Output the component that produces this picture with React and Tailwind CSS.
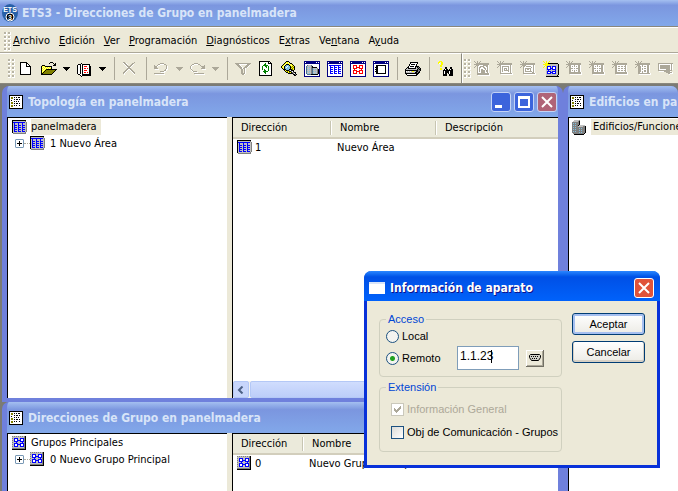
import React from "react";

const UI = "font-['DejaVu_Sans_Condensed','Noto_Sans',sans-serif]";
const CAPTION = "font-['DejaVu_Sans_Condensed','Noto_Sans',sans-serif]";

const COLORS = {
  k: "#000000", w: "#ffffff", g: "#aca899", d: "#808080", s: "#c0c0c0",
  b: "#0000ff", n: "#000080", y: "#ffff00", o: "#808000", r: "#ff0000",
  e: "#008000", c: "#80c0e0", l: "#ffff99", m: "#507088",
};

function Pixels({ rows, size = 16 }) {
  const rects = [];
  rows.forEach((row, y) => {
    let x = 0;
    while (x < row.length) {
      const ch = row[x];
      let end = x + 1;
      while (end < row.length && row[end] === ch) end++;
      if (COLORS[ch]) rects.push(<rect key={`${x}-${y}`} x={x} y={y} width={end - x} height={1} fill={COLORS[ch]} />);
      x = end;
    }
  });
  return (
    <svg width={size} height={size} viewBox={`0 0 ${size} ${size}`} shapeRendering="crispEdges" className="block shrink-0" aria-hidden="true">
      {rects}
    </svg>
  );
}

const NEW = [
  "", "..kkkkkkk", "..kwwwwwkk", "..kwwwwwkwk", "..kwwwwwkwwk", "..kwwwwwkkkkk", "..kwwwwwwwwwk", "..kwwwwwwwwwk",
  "..kwwwwwwwwwk", "..kwwwwwwwwwk", "..kwwwwwwwwwk", "..kwwwwwwwwwk", "..kwwwwwwwwwk", "..kkkkkkkkkkk",
];
const OPEN = [
  "", ".........kkk", "........k...k.k", ".............kk", ".kkk........kkk", "kylykkkkkkk", "klylylylylk", "kylylylylyk",
  "klylykkkkkkkkkkk", "kylykoooooooook", "klykoooooooook", "kykoooooooook", "kkoooooooook", "kkkkkkkkkkk",
];
const BOOK = [
  "", "", "....k", ".kkkwkkkkkkkk", "kwwkwkwwwwwwk", "kwwkwkwrrrwwkk", "kwwkwkwwwwwwkk", "kwwkwkwrrwrwkk",
  "kwwkwkwwwwwwkk", "kwwkwkwrrrwwkk", "kwwkwkwwwwwwkk", "kwwkwkwrrwrwkk", "kwwkwkwwwwwwkk", ".kkwwkkkkkkkkk", "...kwkkkkkkkkk", "....k",
];
const DELETE = [
  "", ".gg.........g", ".wggw.....gg", "..wggw...ggw", "...wgg..ggw", "....wggggw", ".....wggw", ".....gggg",
  "....ggwwgg", "...ggw..wgg", "..ggw....wgg", ".ggw......wgg", ".gw........wg", "..w.........w",
];
const UNDO = [
  "", "", "......gggg", "....ggwwwwgg", "g..gww......g", "gggw........gw", "ggg.........gw", "gggg........gw",
  ".wwww......gww", "..........ggw", "......ggggww", ".......wwww", "gggggggggg", ".wwwwwwwwww",
];
const REDO = [
  "", "", "....gggg", "..ggwwwwgg", ".gww......g...g", "gw.........gggg", "gw..........ggg", "gw.........gggg",
  ".g..........wwww", ".wg", "..wgggg", "....wwww", "....gggggggggg", ".....wwwwwwwwww",
];
const FILTER = [
  "", "", "gggggggggggggggg", ".gggwwwwwwwwggg", "..gggw.....gggw", "...gggw...gggw", "....gggw.gggw", ".....ggwggw",
  "......gg.gw", "......gg.gw", "......gg.gw", "......gg.gw", "......ggggw", ".......ggw",
];
const REFRESH = [
  ".kkkkkkkkkkk", ".kwwwwwwwwkwk", ".kwwwwwewwkkkk", ".kwwwweewwwwwk", ".kwwweeeeewwwk", ".kwwewweewewwk", ".kwwewwwewewwk",
  ".kwwewwwwwewwk", ".kwwewewwwewwk", ".kwwwweewwewwk", ".kwwweeeeewwwk", ".kwwwweewwwwwk", ".kwwwwwewwwwwk", ".kwwwwwwwwwwwk", ".kkkkkkkkkkkkk",
];
const SEARCH = [
  ".....kkk", "....kyylk", "...kylylykk", "..kylkkkylyk", ".kylkccckylyk", "kylkccwcckyoyk", "kylkcwccckoyok", ".kykccccckyoyk",
  "..kkkccckkkoyk", "...kykkkdwkkk", "....kyoykkdwk", ".....kkyoykddkk", ".......kkkkkdwk", "............kkdk", ".............kk",
];
const WIN_BUILDING = [
  "nnnnnnnnnnnnnnnn", "nwnnnnnnnnnnwnwn", "nnnnnnnnnnnnnnnn", "nwwwwwwwwwwwwwwn", "nwwmsssmwwwwwwwn", "nwmssssdkwwwwwwn", "nwmcscsdkkkkkwwn",
  "nwmssssdmssssdwn", "nwmcscsdmcscsdkn", "nwmssssdmssssdkn", "nwmcscsdmcscsdkn", "nwmssssdmssssdkn", "nwmcscsdmcscsdkn", "nwwmmmmkkkkkkkwn", "nwwwwwwwwwwwwwwn", "nnnnnnnnnnnnnnnn",
];
const WIN_TABLE = [
  "nnnnnnnnnnnnnnnn", "nwnnnnnnnnnnwnwn", "nnnnnnnnnnnnnnnn", "nwwwwwwwwwwwwwwn", "nwbbbbbbbbbbbbwn", "nwwbwwwbwwwbwwwn", "nwwbbbwbbbwbbbwn",
  "nwwbwwwbwwwbwwwn", "nwwbbbwbbbwbbbwn", "nwwbwwwbwwwbwwwn", "nwwbbbwbbbwbbbwn", "nwwbwwwbwwwbwwwn", "nwwbbbwbbbwbbbwn", "nwwwwwwwwwwwwwwn", "nwwwwwwwwwwwwwwn", "nnnnnnnnnnnnnnnn",
];
const WIN_GROUP = [
  "nnnnnnnnnnnnnnnn", "nwnnnnnnnnnnwnwn", "nnnnnnnnnnnnnnnn", "nwwwwwwwwwwwwwwn", "nwwrrrrwwrrrrwwn", "nwwrwwrwwrwwrwwn", "nwwrwwrrrrwwrwwn",
  "nwwrrrrwwrrrrwwn", "nwwwrwwwwwwrwwwn", "nwwrrrrwwrrrrwwn", "nwwrwwrrrrwwrwwn", "nwwrwwrwwrwwrwwn", "nwwrrrrwwrrrrwwn", "nwwwwwwwwwwwwwwn", "nwwwwwwwwwwwwwwn", "nnnnnnnnnnnnnnnn",
];
const WIN_BOX = [
  "nnnnnnnnnnnnnnnn", "nwnnnnnnnnnnwnwn", "nnnnnnnnnnnnnnnn", "nwwwwwwwwwwwwwwn", "nwwkkkkkkkkkkwwn", "nwwkkwwwwwwwkwwn", "nwkkkwwwwwwwkwwn",
  "nwwkkwwwwwwwkwwn", "nwkkkwwwwwwwkwwn", "nwwkkwwwwwwwkwwn", "nwkkkwwwwwwwkwwn", "nwwkkwwwwwwwkwwn", "nwwkkkkkkkkkkwwn", "nwwwwwwwwwwwwwwn", "nwwwwwwwwwwwwwwn", "nnnnnnnnnnnnnnnn",
];
const PRINT = [
  "", ".....kkkkkkkk", ".....kwwwwwwk", "....kwkkkkwk", "....kwwwwwwk", "...kwkkkkwkkkk", "..kkwwwwwwkskdk", ".kskkkkkkkksdkdk",
  "kssssssssssskdkk", "kkkkkkkkkkkkkddk", "kwswswsyysskkdk", "kssssssssskkdkk", "kkkkkkkkkkkkkk", ".kwwwwwwwwwkk", "..kkkkkkkkkk",
];
const FIND = [
  "..yyy", ".yy.yy", ".yw.yy", "....yy", "...yy", "...yy", "........kk...kk", "...yy...kk...kk",
  "...yy..kwkk.kwkk", "......kkkkkkkkkk", "......kwkkkkwkkk", "......kwkkkkwkkk", "......kwkk.kwkkk", "......kkkk..kkkk", "......kkkk..kkkk",
];
const SHEET = [
  "kkkkkkkkkkkkkk", "kwwwwwwwwwwwwk", "kwoowkwkwkkwwk", "kwoowwwwwwwwwk", "kwwwwkwkkwkwwk", "kwkwwwwwwwwwwk", "kwwwwkwkwkwwwk",
  "kwoowwwwwwwwwk", "kwoowkwkkwkwwk", "kwwwwwwwwwwwwk", "kwoowkwkwwkwwk", "kwoowwwwwwwwwk", "kwwwwwwwwwwwwk", "kkkkkkkkkkkkkk",
];
const TABLE = [
  "kkkkkkkkkkkkkk", "kssssssssssssd", "kbbbbbbbbbbbbsd", "ksbsssbsssbsssd", "ksbsssbsssbsssd", "ksbbbsbbbsbbbsd", "ksbsssbsssbsssd",
  "ksbbbsbbbsbbbsd", "ksbsssbsssbsssd", "ksbbbsbbbsbbbsd", "ksbsssbsssbsssd", "ksbbbsbbbsbbbsd", "kssssssssssssd", ".ddddddddddddd",
];
const GROUP = [
  "dsdsdsdsdsdsdk", "ssssssssssssdk", "dsbbbbssbbbbdk", "ssbwwbssbwwbdk", "dsbwwbbbbwwbdk", "ssbbbbssbbbbdk", "dsssbsssssbsdk",
  "ssbbbbssbbbbdk", "dsbwwbbbbwwbdk", "ssbwwbssbwwbdk", "dsbbbbssbbbbdk", "ssssssssssssdk", "dddddddddddddk", "kkkkkkkkkkkkkk",
];
const BUILDING = [
  "..sssssd", ".sssssdk", "dddddddk", "dcdcdddk", "dddddddk", "dcdcddkssssss", "ddddddsssssddk", "dcdcdddddddddk",
  "dddddddcdcdddk", "dcdcdddddddddk", "dddddddcdcdddk", "dcdcdddddddddk", "dddddddcdcdddk", ".dddddddddddk", "..kkkkkkkkkk",
];

const star = ["g..g..g", ".g.g.g", "..ggggggggggggg", "ggggggg.......ggw".replace(/\./g, "g").slice(0, 15)];
const gray = (rows) => star.concat(rows);
const G_HOUSE = gray([
  "..gggwwwwgggggw", ".g.gwwggggwwggw", "g..gwggwwggwwgw", "...gwgwwwwggwgw", "...gwgwggwwgwgw", "...gwgwggggwggw", "...gwgwggggwggw", "...gwwwggggwwgw", "...ggggggggggggw", "...ggggggggggggw", "....wwwwwwwwwwww",
]);
const G_ROOM = gray([
  "..ggwwwwwwwwwgw", ".g.gwgggggggwgw", "g..gwgwwwwwgwgw", "...gwgwgggwgwgw", "...gwgwgwgwgwgw", "...gwgwgggggwgw", "...gwgwwwwwgwgw", "...gwwwwwwwwwgw", "...ggggggggggggw", "....wwwwwwwwwwww",
]);
const G_DEVICE = gray([
  "..ggggwwwwwwwgw", ".g.ggwgggggwwgw", "g..gwwwwwwwgwgw", "...gwggggggwwgw", "...gwgwggwgwwgw", "...gwgwwwwgwwgw", "...gwgggggggwgw", "...gwwwwwwwwggw", "...ggggggggggggw", "....wwwwwwwwwwww",
]);
const G_GROUP = gray([
  "..gggwwwgwwwggw", ".g.ggwgwgwgwggw", "g..ggwwwwwwwggw", "...ggggwgwggggw", "...ggwwwwwwwggw", "...ggwgwgwgwggw", "...ggwwwgwwwggw", "...ggggggggggggw", "...ggggggggggggw", "....wwwwwwwwwwww",
]);
const G_TABLE = gray([
  "..gggwwwwwwwwgw", ".g.ggwggwggwggw", "g..ggwwwwwwwwgw", "...ggwggwggwggw", "...ggwwwwwwwwgw", "...ggwggwggwggw", "...ggwwwwwwwwgw", "...ggggggggggggw", "...ggggggggggggw", "....wwwwwwwwwwww",
]);
const G_LINE = gray([
  "..gggwwgwwwwggw", ".g.gggwgwggwggw", "g..gggwwwwwwggw", "...gggwgwggwggw", "...gggwgwwwwggw", "...gggwwwggwggw", "...gggwgwggwggw", "...ggwwgwwwwggw", "...ggggggggggggw", "....wwwwwwwwwwww",
]);
const G_VIEW = [
  "", "", "ggggggggggggggg", "gwwwwwwwwwwwwgw", "gwggggggggggwgw", "gwggggggggggwgw", "gwggggggggggwgw", "gwggggggggggwgw", "gwwwwwwwggggwgw", "gggggggggggggg", ".wwwwwggggggw", "........ggggggw", "..........ggwww", "...........w",
];
const Y_GROUP = [
  "y..y..y", ".y.y.y", "..yyykkkkkkkkkk", "yyyyyyyssssssssk", "..yyyssssssssssk", ".y.ybbbbsbbbbssk", "y..ybwwbsbwwbssk", "...sbwwbbbwwbssk", "...sbbbbsbbbbssk", "...ssbssssssbssk", "...sbbbbsbbbbssk", "...sbwwbbbwwbssk", "...sbbbbsbbbbssk", "...ssssssssssssk", "...sssssssssssk", "...kkkkkkkkkkkkk",
];

function AppLogo() {
  return (
    <svg width="16" height="18" viewBox="0 0 16 18" className="block shrink-0" aria-hidden="true">
      <ellipse cx="8" cy="9" rx="8" ry="9" fill="#2860a8" />
      <text x="8" y="8" textAnchor="middle" fontSize="7" fontWeight="700" fontFamily="Liberation Sans, sans-serif" fill="#fff">ETS</text>
      <circle cx="8" cy="13" r="4" fill="#000" stroke="#fff" strokeWidth="1" />
      <text x="8" y="16" textAnchor="middle" fontSize="7" fontWeight="700" fontFamily="Liberation Sans, sans-serif" fill="#fff">3</text>
    </svg>
  );
}

function Grip() {
  return (
    <span className="flex w-[7px] shrink-0 flex-col gap-px" aria-hidden="true">
      {[0, 1, 2, 3, 4].map((i) => (
        <span key={i} className="flex gap-px">
          <i className="size-[3px] border-r border-b border-white bg-[#b8b4a4]" />
          <i className="size-[3px] border-r border-b border-white bg-[#b8b4a4]" />
        </span>
      ))}
    </span>
  );
}

function Tool({ icon, label }) {
  return (
    <button type="button" aria-label={label} className="flex h-6 w-[23px] shrink-0 items-center pl-[3px]">
      <Pixels rows={icon} />
    </button>
  );
}

function Drop({ label, muted }) {
  return (
    <button type="button" aria-label={label} className="flex h-6 w-[13px] shrink-0 items-center pl-[2px]">
      <svg width="7" height="4" viewBox="0 0 7 4" shapeRendering="crispEdges" aria-hidden="true">
        <path d="M0 0h7v1h-1v1h-1v1h-1v1h-1v-1h-1v-1h-1v-1h-1z" fill={muted ? "#aca899" : "#000"} />
      </svg>
    </button>
  );
}

function Sep() {
  return <span className="mx-1 h-[23px] w-px shrink-0 bg-[#aca899]" />;
}

function Toolbars() {
  return (
    <div className="flex h-[31px] shrink-0 overflow-hidden border-b border-[#8a887c] bg-[#ece9d8]">
      <div className="flex shrink-0 items-center border-t border-r border-t-white border-r-[#8a887c] pr-1 pl-2" role="toolbar" aria-label="Estándar">
        <Grip />
        <Tool icon={NEW} label="Nuevo" />
        <Tool icon={OPEN} label="Abrir" />
        <Drop label="Abrir recientes" />
        <Tool icon={BOOK} label="Catálogo" />
        <Drop label="Catálogos" />
        <Sep />
        <Tool icon={DELETE} label="Borrar" />
        <Sep />
        <Tool icon={UNDO} label="Deshacer" />
        <Drop label="Lista deshacer" muted />
        <Tool icon={REDO} label="Rehacer" />
        <Drop label="Lista rehacer" muted />
        <Sep />
        <Tool icon={FILTER} label="Filtro" />
        <Tool icon={REFRESH} label="Actualizar" />
        <Tool icon={SEARCH} label="Explorar" />
        <Tool icon={WIN_BUILDING} label="Edificios" />
        <Tool icon={WIN_TABLE} label="Topología" />
        <Tool icon={WIN_GROUP} label="Direcciones de Grupo" />
        <Tool icon={WIN_BOX} label="Aparatos" />
        <Sep />
        <Tool icon={PRINT} label="Imprimir" />
        <Sep />
        <Tool icon={FIND} label="Buscar" />
      </div>
      <div className="flex min-w-0 flex-1 items-center overflow-hidden border-t border-l border-white pl-px" role="toolbar" aria-label="Insertar">
        <Grip />
        <Tool icon={G_HOUSE} label="Nuevo edificio" />
        <Tool icon={G_ROOM} label="Nueva sala" />
        <Tool icon={G_DEVICE} label="Nuevo armario" />
        <Tool icon={Y_GROUP} label="Nuevo grupo principal" />
        <Tool icon={G_GROUP} label="Nuevo grupo intermedio" />
        <Tool icon={G_GROUP} label="Nueva dirección" />
        <Tool icon={G_TABLE} label="Nueva área" />
        <Tool icon={G_LINE} label="Nueva línea" />
        <Tool icon={G_VIEW} label="Nuevo aparato" />
      </div>
    </div>
  );
}

const MENUS = [
  ["", "A", "rchivo"], ["", "E", "dición"], ["", "V", "er"], ["", "P", "rogramación"],
  ["", "D", "iagnósticos"], ["E", "x", "tras"], ["Ve", "n", "tana"], ["A", "y", "uda"],
];

function CaptionButton({ label, tone, children }) {
  return (
    <button type="button" aria-label={label} className={`flex size-5 items-center justify-center rounded-[3px] border text-white ${tone}`}>
      <svg width="18" height="18" viewBox="0 0 18 18" aria-hidden="true">{children}</svg>
    </button>
  );
}

const CROSS = <path d="M4 4l10 10M14 4L4 14" stroke="currentColor" strokeWidth="2" fill="none" />;
const BLUE_TONE = "border-[#c4d3f5] bg-[#3c64dc]";

function ChildWindow({ title, buttons, className, children }) {
  return (
    <section className={`flex min-w-0 flex-col overflow-hidden rounded-t-[7px] border-l-[5px] border-[#6f80dc] bg-[#6f80dc] ${className}`}>
      <header className="-mx-[5px] flex h-[31px] shrink-0 items-center bg-linear-to-b from-[#a4bff0] via-[#7b96df] via-25% to-[#82a8ea] pr-[6px] pl-[7px]">
        <Pixels rows={SHEET} size={14} />
        <h2 className={`ml-[5px] min-w-0 flex-1 overflow-hidden text-[12px] leading-4 font-bold whitespace-nowrap text-[#d8e4f8] ${CAPTION}`}>{title}</h2>
        {buttons && (
          <div className="flex gap-[3px]">
            <CaptionButton label="Minimizar" tone={BLUE_TONE}><path d="M3 12h7v3h-7z" fill="currentColor" /></CaptionButton>
            <CaptionButton label="Maximizar" tone={BLUE_TONE}><path d="M3 3h12v12h-12zM5 6h8v7h-8z" fillRule="evenodd" fill="currentColor" /></CaptionButton>
            <CaptionButton label="Cerrar" tone="border-[#c4d3f5] bg-[#b06478]">{CROSS}</CaptionButton>
          </div>
        )}
      </header>
      <div className="flex min-h-0 flex-1 bg-[#ece9d8]">{children}</div>
    </section>
  );
}

function Tree({ icon, root, child, selected }) {
  return (
    <div className="w-[220px] shrink-0 border-t border-l border-black bg-white pt-px pl-1">
      <div className="flex h-4 items-center gap-1">
        <Pixels rows={icon} size={15} />
        <span className={`h-4 pr-1 leading-[15px] ${selected ? "bg-[#ece9d8]" : ""}`}>{root}</span>
      </div>
      <div className="flex h-4 items-center pl-[3px]">
        <button type="button" aria-label={`Expandir ${child}`} className="size-[9px] shrink-0 rounded-[1px] border border-[#7898b5] bg-white">
          <svg width="7" height="7" viewBox="0 0 7 7" shapeRendering="crispEdges" aria-hidden="true"><path d="M1 3h5v1h-5zM3 1h1v5h-1z" /></svg>
        </button>
        <span className="w-[6px] border-t border-dotted border-[#aca899]" />
        <Pixels rows={icon} size={15} />
        <span className="ml-[5px] leading-[15px]">{child}</span>
      </div>
    </div>
  );
}

function List({ icon, heads, cells, widths }) {
  return (
    <table className="w-full table-fixed border-collapse text-left">
      <thead>
        <tr className="h-5 border-b-2 border-[#d2cebc] bg-[#ebeadb]">
          {heads.map((h, i) => (
            <th key={h} className={`relative p-0 pl-2 font-normal ${widths[i]}`}>
              {h}
              {i < heads.length - 1 && <span className="absolute top-[3px] right-0 h-[14px] w-[2px] border-l border-[#c7c5b2] bg-white" />}
            </th>
          ))}
        </tr>
      </thead>
      <tbody>
        <tr className="h-[18px]">
          <td className="p-0 pl-1"><span className="flex items-center gap-[3px]"><Pixels rows={icon} size={15} />{cells[0]}</span></td>
          <td className="overflow-visible p-0 pl-[5px] whitespace-nowrap">{cells[1]}</td>
          {heads.length > 2 && <td />}
        </tr>
      </tbody>
    </table>
  );
}

function PushButton({ children, primary }) {
  return (
    <button type="button" className={`h-[22px] w-full rounded-[3px] border border-[#003c74] bg-linear-to-b from-white to-[#ecebe5] leading-4 ${primary ? "shadow-[inset_0_0_0_2px_#a5bff0]" : "shadow-[inset_0_-1px_0_1px_#d6d0c5]"}`}>
      {children}
    </button>
  );
}

function DeviceDialog() {
  const legend = "px-[2px] leading-3 text-[#0046d5]";
  const radio = "size-[13px] shrink-0 appearance-none rounded-full border border-[#1c5180] bg-[#f4f4f0] checked:bg-[radial-gradient(circle,#21a121_0_2px,#f4f4f0_3px)]";
  const box = "size-[13px] shrink-0 appearance-none border";
  return (
    <div role="dialog" aria-label="Información de aparato" className="absolute top-[271px] left-[364px] w-[296px] rounded-t-[8px] border-x-[3px] border-b-[3px] border-[#0831d9] bg-[#ece9d8] font-['Liberation_Sans',sans-serif] text-[11px]">
      <header className="-mx-[3px] flex h-[30px] items-center rounded-t-[7px] bg-linear-to-b from-[#2a86ff] via-[#0050e6] via-20% to-[#0062fb] pt-[3px] pr-[6px] pl-[5px]">
        <span className="h-3 w-4 border-t-2 border-[#d8e4f8] bg-white" />
        <h2 className={`ml-[5px] flex-1 text-[12px] leading-4 font-bold text-white [text-shadow:1px_1px_#0f1089] ${CAPTION}`}>Información de aparato</h2>
        <CaptionButton label="Cerrar diálogo" tone="border-white bg-[#e0533a]">{CROSS}</CaptionButton>
      </header>
      <form className="flex h-[164px] gap-[10px] px-3 pt-3" onSubmit={(e) => e.preventDefault()}>
        <div className="w-[183px] shrink-0">
          <fieldset className="h-[64px] min-w-0 rounded-[4px] border border-[#d0d0bf] pl-[6px]">
            <legend className={legend}>Acceso</legend>
            <label className="mt-[5px] flex h-3 items-center gap-[3px]"><input type="radio" name="acceso" className={radio} />Local</label>
            <div className="mt-1 flex h-6 items-center">
              <label className="flex w-[71px] items-center gap-[3px]"><input type="radio" name="acceso" defaultChecked className={radio} />Remoto</label>
              <span className="relative">
                <input aria-label="Dirección remota" defaultValue="1.1.23" className="block h-6 w-[62px] border border-[#7f9db9] bg-white pb-1 pl-[2px] text-[12px] outline-none" />
                <span className="absolute top-1 left-[34px] h-[13px] w-px bg-black" />
              </span>
              <button type="button" aria-label="Conexión" className="ml-[7px] flex h-[17px] w-[18px] items-center justify-center border-r border-b border-[#716f64] bg-[#ece9d8] shadow-[inset_1px_1px_#fff,inset_-1px_-1px_#aca899]">
                <svg width="12" height="8" viewBox="0 0 12 8" aria-hidden="true">
                  <path d="M1.500.5h9l1 1v2l-2 3h-7l-2-3v-2z" fill="#d0d0c8" stroke="#000" />
                  <path d="M2 2.500h8M3 4.500h6" stroke="#000" strokeDasharray="1 1" />
                </svg>
              </button>
            </div>
          </fieldset>
          <fieldset className="mt-1 h-[71px] min-w-0 rounded-[4px] border border-[#d0d0bf] pl-[6px]">
            <legend className={legend}>Extensión</legend>
            <label className="mt-[9px] ml-[5px] flex h-[14px] items-center gap-[3px] text-[#aca899]">
              <span className="relative flex">
                <input type="checkbox" defaultChecked disabled className={`${box} border-[#cac8bb] bg-white`} />
                <svg className="pointer-events-none absolute top-[3px] left-[3px]" width="7" height="7" viewBox="0 0 7 7" shapeRendering="crispEdges" aria-hidden="true"><path d="M0 2h1v1h1v1h1v-1h1v-1h1v-1h1v-1h1v3h-1v1h-1v1h-1v1h-1v1h-1v-1h-1v-1h-1z" fill="#aca899" /></svg>
              </span>
              Información General
            </label>
            <label className="mt-[9px] ml-[5px] flex h-[14px] items-center gap-[3px] whitespace-nowrap">
              <input type="checkbox" className={`${box} border-[#1c5180] bg-linear-to-br from-[#dcdcd7] to-white`} />
              Obj de Comunicación - Grupos
            </label>
          </fieldset>
        </div>
        <div className="flex w-[73px] flex-col gap-[6px]">
          <PushButton primary>Aceptar</PushButton>
          <PushButton>Cancelar</PushButton>
        </div>
      </form>
    </div>
  );
}

export default function App() {
  return (
    <div className={`relative flex h-screen flex-col overflow-hidden bg-[#7b7b74] text-[11px] leading-4 text-black ${UI}`}>
      <header className="flex h-[26px] shrink-0 items-center bg-linear-to-b from-[#a4bff0] via-[#7b96df] via-20% to-[#82a8ea] pl-[2px]">
        <AppLogo />
        <h1 className={`ml-1 text-[12px] leading-4 font-bold whitespace-nowrap text-[#d8e4f8] ${CAPTION}`}>ETS3 - Direcciones de Grupo en panelmadera</h1>
      </header>
      <nav className="flex h-[27px] shrink-0 items-center border-t border-b border-t-[#8a887c] border-b-[#aca899] bg-[#ece9d8] pt-[3px] pl-1 shadow-[inset_0_1px_#fff]">
        <Grip />
        {MENUS.map(([a, u, z]) => (
          <button key={a + u + z} type="button" className="pr-[5px] pl-1 first-of-type:pl-[2px]">{a}<span className="underline">{u}</span>{z}</button>
        ))}
      </nav>
      <Toolbars />
      <main className="grid min-h-0 flex-1 grid-cols-[561px_1fr] pt-[2px] pl-[2px]">
        <div className="flex min-h-0 flex-col">
          <ChildWindow title="Topología en panelmadera" buttons className="h-[316px] shrink-0 border-r-[5px] border-b-4">
            <Tree icon={TABLE} root="panelmadera" child="1 Nuevo Área" selected />
            <div className="ml-[5px] flex min-w-0 flex-1 flex-col border-t border-l border-black bg-white">
              <List icon={TABLE} heads={["Dirección", "Nombre", "Descripción"]} cells={["1", "Nuevo Área"]} widths={["w-[99px]", "w-[105px]", ""]} />
              <div className="mt-auto flex h-[17px] bg-[#f4f3ee]">
                <button type="button" aria-label="Desplazar a la izquierda" className="flex w-4 items-center justify-center rounded-[2px] border border-[#b4c8f6] bg-[#c8d6fb]">
                  <svg width="8" height="8" viewBox="0 0 8 8" aria-hidden="true"><path d="M5.500.500L2 4l3.500 3.500" fill="none" stroke="#4d6185" strokeWidth="2" /></svg>
                </button>
                <span className="ml-px w-[250px] rounded-[2px] border border-[#b4c8f6] bg-linear-to-b from-[#d0ddfd] to-[#bccdf9]" />
              </div>
            </div>
          </ChildWindow>
          <ChildWindow title="Direcciones de Grupo en panelmadera" className="flex-1 border-r-[5px]">
            <Tree icon={GROUP} root="Grupos Principales" child="0 Nuevo Grupo Principal" />
            <div className="ml-[5px] min-w-0 flex-1 border-t border-l border-black bg-white">
              <List icon={GROUP} heads={["Dirección", "Nombre"]} cells={["0", "Nuevo Grupo Principal"]} widths={["w-[71px]", ""]} />
            </div>
          </ChildWindow>
        </div>
        <ChildWindow title="Edificios en panelmadera" className="">
          <div className="min-w-0 flex-1 overflow-hidden border-t border-l border-black bg-white pt-px pl-[3px]">
            <div className="flex h-4 items-center gap-1 whitespace-nowrap">
              <Pixels rows={BUILDING} size={15} />
              <span className="h-4 bg-[#ece9d8] px-[2px] leading-[15px]">Edificios/Funciones</span>
            </div>
          </div>
        </ChildWindow>
      </main>
      <DeviceDialog />
    </div>
  );
}
